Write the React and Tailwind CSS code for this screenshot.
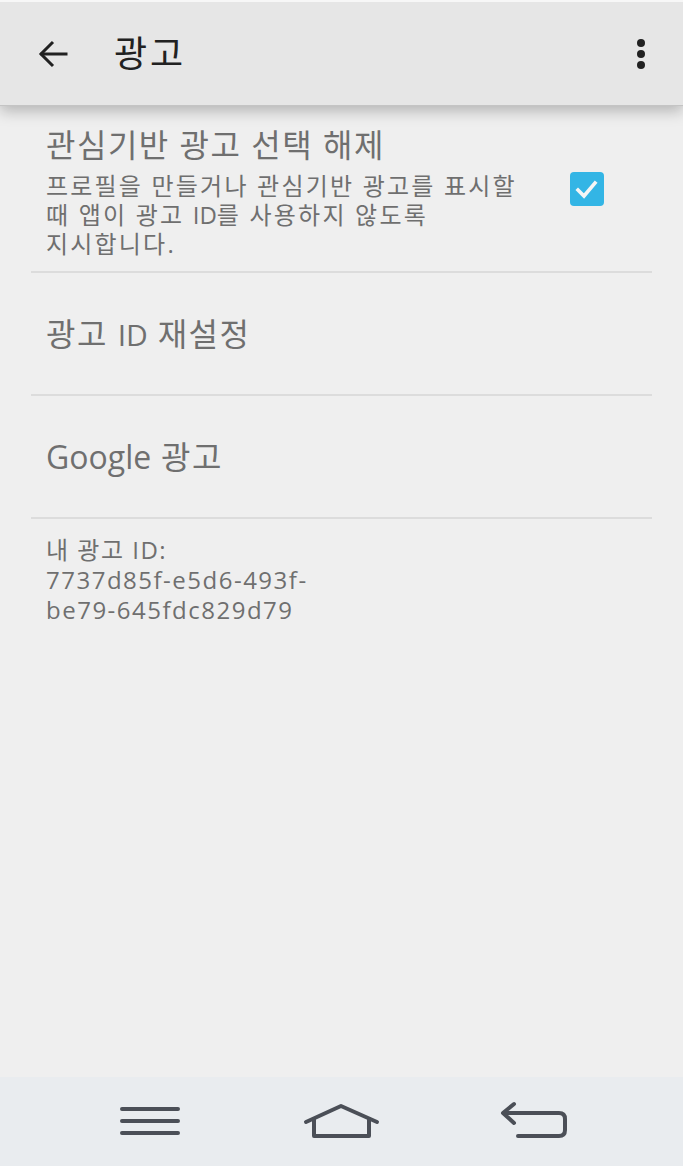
import { useState } from 'react';

const font = { fontFamily: '"Open Sans", "Noto Sans CJK KR", sans-serif' };

// Latin runs inside Korean lines keep normal spacing
function L({ children, size = '' }) {
  return <span className={`tracking-normal ${size}`}>{children}</span>;
}

function BackArrow() {
  return (
    <svg width="32" height="32" viewBox="0 0 32 32" fill="none" stroke="#212121" strokeWidth="3" strokeLinecap="square">
      <path d="M29 16H5" />
      <path d="M16 4L4 16l12 12" strokeLinecap="butt" />
    </svg>
  );
}

function OverflowDots() {
  return (
    <svg width="10" height="32" viewBox="0 0 10 32" fill="#212121">
      <circle cx="5" cy="5" r="4" />
      <circle cx="5" cy="16" r="4" />
      <circle cx="5" cy="27" r="4" />
    </svg>
  );
}

function Checkbox({ checked, onToggle }) {
  return (
    <button
      onClick={onToggle}
      className={`w-[34px] h-[34px] rounded-[4px] flex items-center justify-center shrink-0 ${checked ? 'bg-[#33b5e5]' : 'border-2 border-[#9e9e9e]'}`}
    >
      {checked && (
        <svg width="26" height="26" viewBox="0 0 26 26" fill="none" stroke="#f5f5f5" strokeWidth="3.6" strokeLinecap="square">
          <path d="M4 14l6 6L21 7" />
        </svg>
      )}
    </button>
  );
}

function NavIcons() {
  return (
    <div className="h-[89px] bg-[#e9ecef] relative shrink-0">
      <svg width="683" height="89" viewBox="0 0 683 89" fill="none" className="absolute left-0 top-0">
        <g stroke="#4b4f57" strokeWidth="4" strokeLinecap="round" strokeLinejoin="round">
          <path d="M122 32h56M122 44h56M122 56h56" />
          <path d="M306 45L341 29l36 16" />
          <path d="M314 42v17h55V42" />
          <path d="M514 27l-11 9 11 10" />
          <path d="M504 36h55q6 0 6 6v11q0 6-6 6h-41" />
        </g>
      </svg>
    </div>
  );
}

export default function App() {
  const [optOut, setOptOut] = useState(true);

  return (
    <div className="h-[1166px] w-[683px] flex flex-col bg-[#efefef] overflow-hidden" style={font}>
      {/* Action bar */}
      <div className="relative z-10 shrink-0 border-t-2 border-[#f7f7f7] bg-[#e6e6e6] h-[106px] flex items-center border-b border-b-[#c4c4c4] shadow-[0_5px_14px_rgba(0,0,0,0.25)]">
        <div className="w-[114px] pl-[37px] flex items-center">
          <BackArrow />
        </div>
        <h1 className="flex-1 text-[36px] tracking-[3px] leading-none text-[#212121]">광고</h1>
        <div className="pr-[37px] flex items-center">
          <OverflowDots />
        </div>
      </div>

      <div className="flex-1 px-[31px]">
        {/* Opt out of interest-based ads */}
        <div className="flex items-center border-b-2 border-[#dcdcdc] h-[167px] pl-[15px] pr-[48px]">
          <div className="flex-1 pt-[7px]">
            <div className="text-[32px] tracking-[1.5px] leading-[36px] text-[#6f6f6f]">관심기반 광고 선택 해제</div>
            <div className="mt-[8px] text-[24px] tracking-[2.2px] leading-[29px] text-[#6f6f6f]">
              <div>프로필을 만들거나 관심기반 광고를 표시할</div>
              <div>때 앱이 광고 <L>ID</L>를 사용하지 않도록</div>
              <div>지시합니다.</div>
            </div>
          </div>
          <Checkbox checked={optOut} onToggle={() => setOptOut(!optOut)} />
        </div>

        <div className="h-[123px] flex items-center pl-[15px] border-b-2 border-[#dcdcdc] text-[32px] tracking-[1.5px] text-[#6f6f6f]">
          <span>광고 <L size="text-[30px]">ID</L> 재설정</span>
        </div>

        <div className="h-[123px] flex items-center pl-[15px] border-b-2 border-[#dcdcdc] text-[32px] tracking-[1.5px] text-[#6f6f6f]">
          <span><L size="text-[32px]">Google</L> 광고</span>
        </div>

        <div className="pl-[15px] pt-[16px] text-[24px] tracking-[1.5px] leading-[30px] text-[#6f6f6f]">
          <div>내 광고 ID:</div>
          <div>7737d85f-e5d6-493f-</div>
          <div>be79-645fdc829d79</div>
        </div>
      </div>

      <NavIcons />
    </div>
  );
}
